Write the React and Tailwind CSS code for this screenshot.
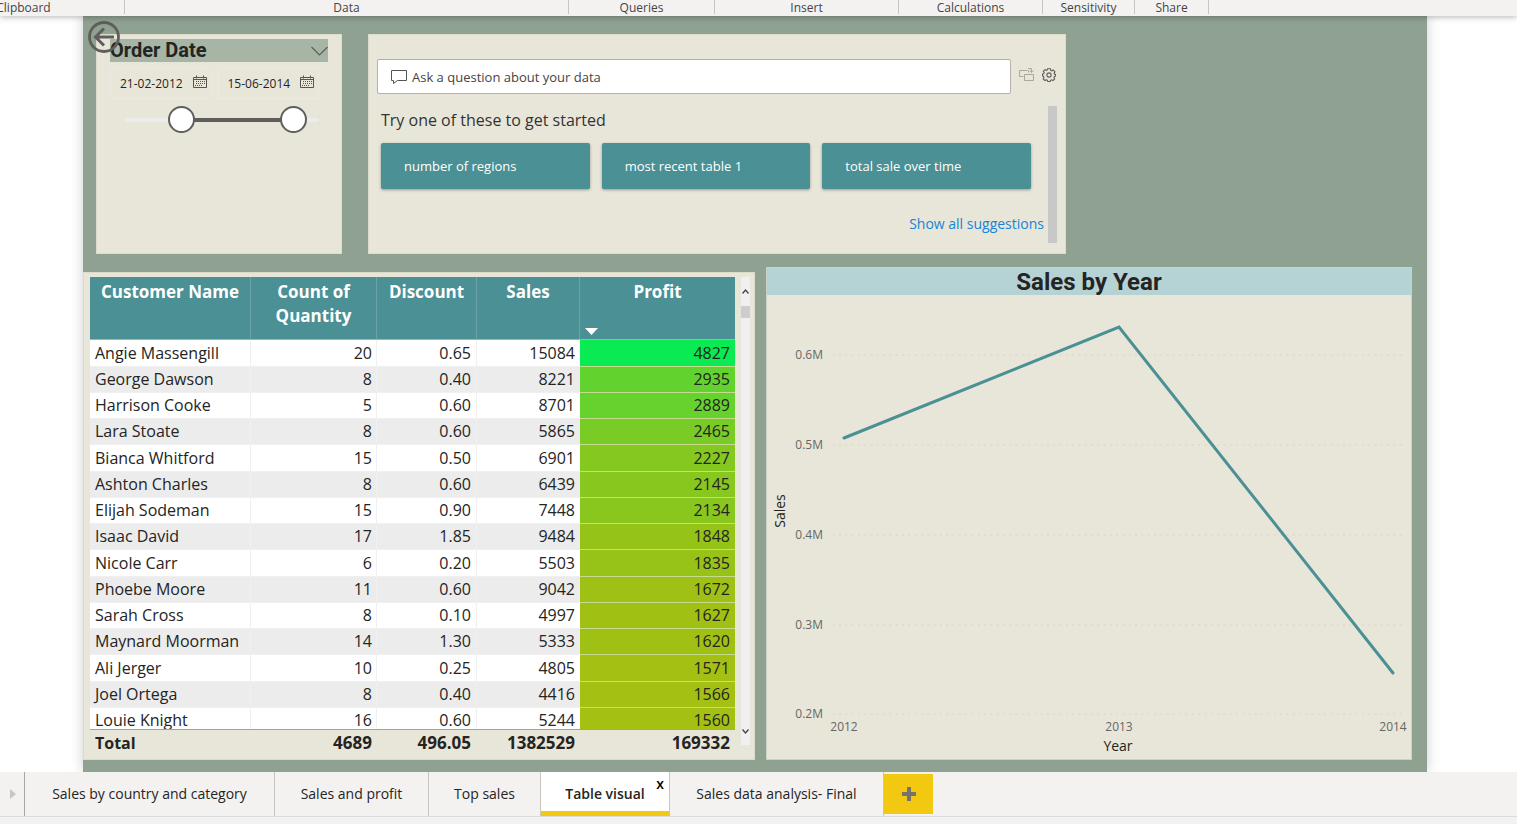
import React from "react";

const ribbonGroups = [
  { label: "Clipboard", size: "w-[202px] -ml-[77px]" },
  { label: "Data", size: "w-[444px]" },
  { label: "Queries", size: "w-[146px]" },
  { label: "Insert", size: "w-[184px]" },
  { label: "Calculations", size: "w-[144px]" },
  { label: "Sensitivity", size: "w-[92px]" },
  { label: "Share", size: "w-[74px]" },
];

const customers = [
  ["Angie Massengill", "20", "0.65", "15084", "4827", "bg-[#09ea53]"],
  ["George Dawson", "8", "0.40", "8221", "2935", "bg-[#62d32e]"],
  ["Harrison Cooke", "5", "0.60", "8701", "2889", "bg-[#65d22d]"],
  ["Lara Stoate", "8", "0.60", "5865", "2465", "bg-[#79cc25]"],
  ["Bianca Whitford", "15", "0.50", "6901", "2227", "bg-[#84c820]"],
  ["Ashton Charles", "8", "0.60", "6439", "2145", "bg-[#88c71e]"],
  ["Elijah Sodeman", "15", "0.90", "7448", "2134", "bg-[#89c71e]"],
  ["Isaac David", "17", "1.85", "9484", "1848", "bg-[#96c318]"],
  ["Nicole Carr", "6", "0.20", "5503", "1835", "bg-[#97c318]"],
  ["Phoebe Moore", "11", "0.60", "9042", "1672", "bg-[#9fc115]"],
  ["Sarah Cross", "8", "0.10", "4997", "1627", "bg-[#a1c014]"],
  ["Maynard Moorman", "14", "1.30", "5333", "1620", "bg-[#a1c014]"],
  ["Ali Jerger", "10", "0.25", "4805", "1571", "bg-[#a3c013]"],
  ["Joel Ortega", "8", "0.40", "4416", "1566", "bg-[#a3c013]"],
  ["Louie Knight", "16", "0.60", "5244", "1560", "bg-[#a4c013]"],
];

const columns = "grid grid-cols-[161fr_126fr_100fr_103fr_155fr]";

function Ribbon() {
  return (
    <header className="relative z-10 flex h-4 bg-[#f3f2f1] text-xs leading-4 text-[#444] shadow-[0_1px_6px_rgba(0,0,0,0.3)]">
      {ribbonGroups.map((g) => (
        <div key={g.label} className={`${g.size} h-[14px] border-r border-[#c8c6c4] text-center`}>
          {g.label}
        </div>
      ))}
    </header>
  );
}

function CalendarIcon() {
  return (
    <svg className="h-[14px] w-[14px] shrink-0" viewBox="0 0 14 14" fill="none" stroke="#555" aria-hidden="true">
      <path d="M.5 2.5h13v10H.5zM.5 4.5h13M3.5.5v3M10.5.5v3" />
      <path d="M3 6.5h9M3 8.5h9M2 10.5h8" strokeDasharray="1 1" />
    </svg>
  );
}

function DateField({ label, value }) {
  return (
    <div className="flex h-[31px] min-w-0 flex-1 items-center border border-[#ebe9e0] pr-1 pl-[9px]">
      <input type="text" aria-label={label} defaultValue={value} className="w-0 min-w-0 flex-1 bg-transparent text-xs text-[#252423] outline-none" />
      <button type="button" aria-label={`Pick ${label}`} className="mb-1">
        <CalendarIcon />
      </button>
    </div>
  );
}

const thumb =
  "pointer-events-none absolute inset-0 m-0 h-[27px] w-full appearance-none bg-transparent [&::-webkit-slider-thumb]:pointer-events-auto [&::-webkit-slider-thumb]:h-[27px] [&::-webkit-slider-thumb]:w-[27px] [&::-webkit-slider-thumb]:appearance-none [&::-webkit-slider-thumb]:rounded-full [&::-webkit-slider-thumb]:border-2 [&::-webkit-slider-thumb]:border-[#605e5c] [&::-webkit-slider-thumb]:bg-white";

function DateSlicer() {
  return (
    <section className="relative border border-[#dcdccb] bg-[#e8e6d9] pt-1 pr-[13px] pl-[13px]">
      <button type="button" aria-label="Back" className="absolute -top-[15px] -left-[10px]">
        <svg width="34" height="34" viewBox="0 0 34 34" fill="none" stroke="#605e5c" aria-hidden="true">
          <circle cx="17" cy="17" r="14.5" strokeWidth="2.8" />
          <path d="M27 17H9M17 8.500L8.500 17l8.500 8.500" strokeWidth="3" />
        </svg>
      </button>
      <div className="flex h-[23px] items-center justify-between bg-[#a6b5a5]">
        <h2 className="font-[Roboto,sans-serif] text-xl leading-[23px] font-bold text-[#252423]">Order Date</h2>
        <button type="button" aria-label="Slicer type">
          <svg width="17" height="10" viewBox="0 0 17 10" fill="none" stroke="#605e5c" strokeWidth="1.2" aria-hidden="true">
            <path d="M.5 1l8 8 8-8" />
          </svg>
        </button>
      </div>
      <div className="mt-[6px] mr-[9px] flex gap-[6px]">
        <DateField label="start date" value="21-02-2012" />
        <DateField label="end date" value="15-06-2014" />
      </div>
      <div className="relative mt-[7px] mr-[9px] ml-[15px] flex h-[27px] items-center">
        <div className="h-1 w-full rounded-full bg-[#ececec]">
          <div className="mr-[14%] ml-[29%] h-1 bg-[#605e5c]" />
        </div>
        <input type="range" aria-label="Start date" min="0" max="1000" defaultValue="256" className={thumb} />
        <input type="range" aria-label="End date" min="0" max="1000" defaultValue="928" className={thumb} />
      </div>
    </section>
  );
}

function Suggestion({ children }) {
  return (
    <button type="button" className="h-[46px] flex-1 rounded-[2px] bg-[#4a9094] px-[23px] pt-[2px] text-left text-[13px] font-medium text-white shadow-[0_1px_3px_rgba(0,0,0,0.35)]">
      {children}
    </button>
  );
}

function QuestionBox() {
  return (
    <section className="border border-[#dcdccb] bg-[#e8e6d9] pt-6 pr-2 pl-2">
      <div className="flex items-start">
        <div className="flex h-[35px] flex-1 items-center gap-[5px] rounded-[2px] border border-[#b3b0ad] bg-white px-[13px]">
          <svg width="16" height="14" viewBox="0 0 16 14" fill="none" stroke="#555" aria-hidden="true">
            <path d="M.5.500h15v10H6.500L2.500 13.500v-3h-2z" />
          </svg>
          <input type="text" aria-label="Question" placeholder="Ask a question about your data" className="min-w-0 flex-1 bg-transparent pt-[2px] text-[13px] text-[#333] outline-none placeholder:text-[#444]" />
        </div>
        <div className="flex items-center gap-2 pt-2 pr-px pl-2">
          <button type="button" aria-label="Turn into visual">
            <svg width="15" height="15" viewBox="0 0 15 15" fill="none" stroke="#aaa79f" aria-hidden="true">
              <path d="M8.500 3.500h-8v6h4M5.500 7.500h9v6h-9zM9.500 5.500v-2M9 1.500h3.500v4M10.500 3.500l2 2 2-2" />
            </svg>
          </button>
          <button type="button" aria-label="Settings">
            <svg width="14" height="14" viewBox="0 0 15 15" fill="none" stroke="#605e5c" strokeWidth="1.2" aria-hidden="true">
              <path d="M6 .8h3l.4 1.700 1.100.5 1.500-.9 1.900 1.900-.9 1.500.5 1.100 1.100.3v1.800l-1.300.4-.5 1.200.8 1.400-1.800 1.800-1.500-.8-1.100.5-.4 1.200H6.200l-.5-1.300-1.200-.5-1.400.8-1.800-1.800.8-1.500-.5-1.100L.6 8.500V6.500l1.200-.4.500-1.100-.9-1.500 1.900-1.800 1.400.8 1-.4z" />
              <circle cx="7.500" cy="7.500" r="2.300" />
            </svg>
          </button>
        </div>
      </div>
      <div className="mt-3 flex">
        <div className="flex-1 pr-1 pl-1">
          <p className="mt-[3px] text-base leading-[22px] text-[#333]">Try one of these to get started</p>
          <div className="mt-3 mr-[13px] flex gap-3">
            <Suggestion>number of regions</Suggestion>
            <Suggestion>most recent table 1</Suggestion>
            <Suggestion>total sale over time</Suggestion>
          </div>
          <div className="mt-[25px] text-right text-sm leading-5">
            <a href="#suggestions" className="text-[#1683d8]">Show all suggestions</a>
          </div>
        </div>
        <div className="h-[137px] w-[9px] bg-[#c8c8c8]" />
      </div>
    </section>
  );
}

function Chevron({ down }) {
  return (
    <svg width="7" height="5" viewBox="0 0 7 5" fill="none" stroke="#444" strokeWidth="1.3" aria-hidden="true">
      <path d={down ? "M.5.500l3 3.500 3-3.500" : "M.5 4.500l3-3.500 3 3.500"} />
    </svg>
  );
}

function CustomerTable() {
  return (
    <section className="mt-[5px] flex border border-[#dcdccb] bg-[#e8e6d9] pt-1 pr-1 pl-[6px]">
      <table className="block flex-1 text-base text-[#252423]">
        <thead className="block border-b border-[#8fbcbe] bg-[#4a9094] text-[17px] text-white">
          <tr className={`${columns} h-[62px] leading-6`}>
            <th className="border-r border-[#6ba3a6] pt-[3px] font-bold">Customer Name</th>
            <th className="border-r border-[#6ba3a6] px-4 pt-[3px] font-bold">Count of Quantity</th>
            <th className="border-r border-[#6ba3a6] pt-[3px] font-bold">Discount</th>
            <th className="border-r border-[#6ba3a6] pt-[3px] font-bold">Sales</th>
            <th className="relative pt-[3px] font-bold">
              Profit
              <svg className="absolute bottom-1 left-[5px]" width="13" height="7" viewBox="0 0 13 7" aria-hidden="true">
                <path d="M0 0h13L6.500 7z" fill="#fff" />
              </svg>
            </th>
          </tr>
        </thead>
        <tbody className="block h-[390px] overflow-hidden border-b border-[#7fb0b0]">
          {customers.map(([name, count, discount, sales, profit, shade]) => (
            <tr key={name} className={`${columns} h-[26px] text-right leading-[25px] odd:bg-white even:bg-[#ececec] nth-[4n+1]:h-[27px] nth-[4n+1]:leading-[26px]`}>
              <td className="border-r border-b border-[#f0f0f0] pl-[5px] text-left">{name}</td>
              <td className="border-r border-b border-[#f0f0f0] pr-1">{count}</td>
              <td className="border-r border-b border-[#f0f0f0] pr-[5px]">{discount}</td>
              <td className="border-b border-[#f0f0f0] pr-[5px]">{sales}</td>
              <td className={`${shade} border-b border-[#c5dc8c] pr-[5px]`}>{profit}</td>
            </tr>
          ))}
        </tbody>
        <tfoot className="block">
          <tr className={`${columns} text-right text-[17px] leading-[26px] font-bold`}>
            <td className="pl-[5px] text-left text-base leading-[26px]">Total</td>
            <td className="pr-[5px]">4689</td>
            <td className="pr-[6px]">496.05</td>
            <td className="pr-[5px]">1382529</td>
            <td className="pr-[5px]">169332</td>
          </tr>
        </tfoot>
      </table>
      <div className="ml-[6px] flex h-[468px] w-[9px] flex-col items-center bg-[#f0f0f0]">
        <button type="button" aria-label="Scroll up" className="flex h-[29px] items-center">
          <Chevron />
        </button>
        <div className="h-3 w-full bg-[#cdcdcd]" />
        <button type="button" aria-label="Scroll down" className="mt-auto flex h-[27px] items-center">
          <Chevron down />
        </button>
      </div>
    </section>
  );
}

const gridLines = [
  ["0.6M", 60],
  ["0.5M", 150],
  ["0.4M", 240],
  ["0.3M", 330],
  ["0.2M", 419],
];

function SalesChart() {
  return (
    <section className="border border-[#c9d2c4] bg-[#e8e6d9]">
      <h2 className="h-[27px] bg-[#b5d2d5] text-center font-[Roboto,sans-serif] text-2xl leading-[29px] font-bold text-[#252423]">Sales by Year</h2>
      <svg className="block h-auto w-full" viewBox="0 0 644 464" role="img" aria-label="Sales by Year">
        <g fontSize="12" fill="#666">
          {gridLines.map(([label, y]) => (
            <g key={label}>
              <text x="56" y={y + 4} textAnchor="end">{label}</text>
              <path d={`M66 ${y}H639`} stroke="#d2d0c5" strokeDasharray="1.500 4.800" />
            </g>
          ))}
          <text x="77" y="436" textAnchor="middle">2012</text>
          <text x="352" y="436" textAnchor="middle">2013</text>
          <text x="626" y="436" textAnchor="middle">2014</text>
        </g>
        <g fontSize="14" fill="#252423" textAnchor="middle">
          <text x="351" y="456">Year</text>
          <text transform="translate(18 216) rotate(-90)">Sales</text>
        </g>
        <path d="M77 143L352 32L626 378" fill="none" stroke="#4a9094" strokeWidth="3" strokeLinecap="round" />
      </svg>
    </section>
  );
}

const tab = "h-11 border-r border-[#c8c6c4] text-center text-[#252423]";

function PageTabs() {
  return (
    <footer className="border-b-[7px] border-[#f3f2f1] bg-[#f3f2f1] text-sm">
      <nav className="flex h-[45px] border-b border-[#dddbd9]" aria-label="Pages">
        <button type="button" aria-label="Next pages" className="flex h-11 w-[25px] items-center justify-end border-r border-[#a8a6a4] pr-2">
          <svg width="6" height="10" viewBox="0 0 6 10" aria-hidden="true">
            <path d="M0 0l6 5-6 5z" fill="#c8c6c4" />
          </svg>
        </button>
        <button type="button" className={`${tab} w-[250px]`}>Sales by country and category</button>
        <button type="button" className={`${tab} w-[154px]`}>Sales and profit</button>
        <button type="button" className={`${tab} w-[112px]`}>Top sales</button>
        <div className="relative flex">
          <button type="button" aria-current="page" className={`${tab} w-[129px] border-b-[5px] border-b-[#f2c811] bg-white pt-[5px] font-semibold`}>Table visual</button>
          <button type="button" aria-label="Delete page" className="absolute top-1 right-[6px] text-sm leading-4 font-semibold">x</button>
        </div>
        <button type="button" className={`${tab} w-[214px]`}>Sales data analysis- Final</button>
        <button type="button" aria-label="New page" className="mt-[2px] flex h-10 w-[49px] items-center justify-center bg-[#f2c811]">
          <svg width="14" height="14" viewBox="0 0 14 14" aria-hidden="true">
            <path d="M7 0v14M0 7h14" stroke="#76736a" strokeWidth="4" />
          </svg>
        </button>
      </nav>
    </footer>
  );
}

export default function App() {
  return (
    <div className="flex min-h-screen flex-col overflow-x-clip bg-white font-['Open_Sans','Noto_Sans',sans-serif]">
      <Ribbon />
      <main className="mr-[90px] ml-[83px] flex-1 bg-[#8fa191] pt-[18px] pb-3 shadow-[0_0_12px_rgba(0,0,0,0.2)]">
        <div className="mr-[15px] ml-[13px] grid h-[220px] grid-cols-[246fr_698fr_320fr] gap-[26px]">
          <DateSlicer />
          <QuestionBox />
        </div>
        <div className="mt-[13px] mr-[15px] grid grid-cols-[672fr_646fr] gap-[11px]">
          <CustomerTable />
          <SalesChart />
        </div>
      </main>
      <PageTabs />
    </div>
  );
}
